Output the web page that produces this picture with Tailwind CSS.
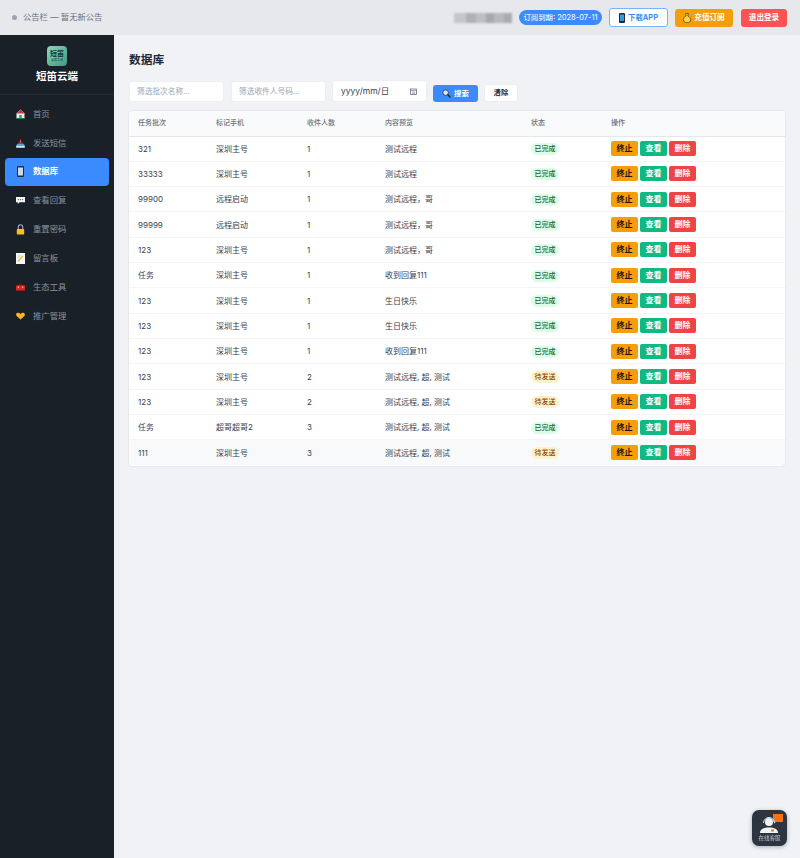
<!DOCTYPE html>
<html lang="zh">
<head>
<meta charset="utf-8">
<script src="https://cdn.jsdelivr.net/npm/@tailwindcss/browser@4"></script>
<title>数据库</title>
</head>
<body class="h-[858px] w-[800px] overflow-hidden bg-[#f0f2f5] font-['Inter','Noto_Sans_CJK_SC',sans-serif] text-[8px] text-[#374151]">
<header class="flex h-[35px] items-center bg-[#e6e8ec] pl-[12px] pr-[13px]">
  <span class="h-[5px] w-[5px] rounded-full bg-[#9ca3af]"></span>
  <span class="ml-[6px] text-[8.300px] text-[#6b7280]">公告栏 — 暂无新公告</span>
  <div class="ml-auto flex items-center">
    <div class="flex h-[10px] w-[58px] blur-[1px]">
      <span class="w-[12px] bg-[#c4c6ca]"></span><span class="w-[10px] bg-[#aeb0b5]"></span><span class="w-[10px] bg-[#bcbec3]"></span><span class="w-[8px] bg-[#a6a8ae]"></span><span class="w-[10px] bg-[#b6b8bd]"></span><span class="w-[8px] bg-[#a9abb1]"></span>
    </div>
    <div class="ml-[7px] flex h-[15px] w-[83px] items-center justify-center rounded-full bg-[#3b8bff] text-[7.400px] font-medium text-[#e8f1ff]">订阅到期: 2028-07-11</div>
    <div class="ml-[7px] flex h-[19px] w-[59px] items-center justify-center gap-[3px] rounded-[3px] border border-[#7fb0fb] bg-white text-[7.400px] font-bold text-[#3b8bff]">
      <svg width="6" height="10" viewBox="0 0 6 10"><rect width="6" height="10" rx="1" fill="#1f2937"/><rect x="1" y="1.500" width="4" height="6.500" fill="#2f9be0"/></svg>下载APP</div>
    <div class="ml-[7px] flex h-[18px] w-[58px] items-center justify-center gap-[3px] rounded-[3px] bg-[#f59e0b] text-[7.600px] font-bold text-white">
      <svg width="8" height="10" viewBox="0 0 8 10"><path d="M2.600 .5h2.800L4.800 3c2 .8 2.800 2.300 2.800 3.800C7.600 8.800 6 9.700 4 9.700S.4 8.800.4 6.800C.4 5.300 1.200 3.800 3.200 3z" fill="#fcd34d" stroke="#5b3a05" stroke-width=".7"/></svg>充值订阅</div>
    <div class="ml-[8px] flex h-[18px] w-[46px] items-center justify-center rounded-[3px] bg-[#ff5252] text-[7.600px] font-bold text-white">退出登录</div>
  </div>
</header>
<div class="flex h-[823px]">
  <aside class="w-[114px] shrink-0 bg-[#1a2028]">
    <div class="flex h-[60px] flex-col items-center border-b border-[#252c35] pt-[11px]">
      <div class="flex h-[20px] w-[20px] flex-col items-center justify-center rounded-[4px] bg-gradient-to-br from-[#8fd8c0] to-[#3d9880] leading-none">
        <span class="text-[7px] font-bold leading-[8px] text-[#123b30]">短笛</span>
        <span class="text-[3px] leading-[4px] text-[#123b30]">云端工具</span>
      </div>
      <div class="mt-[3px] text-[10.500px] font-bold leading-[16px] text-white">短笛云端</div>
    </div>
    <nav class="flex flex-col pt-[5px]">
      <a class="mx-[5px] flex h-[28.800px] items-center pl-[11px] text-[8.400px] text-[#8a929e]">
        <svg class="mr-[8px] w-[9px]" width="9" height="10" viewBox="0 0 9 10"><path d="M4.500 .5 8.500 4.500V9.500H.5V4.500z" fill="#e8ecef"/><path d="M4.500 .5 8.500 4.500H.5z" fill="#c23b3b"/><rect x="3.300" y="6" width="2.400" height="3.500" fill="#4b8f5a"/><path d="M.5 9.500h8" stroke="#15803d"/></svg>首页</a>
      <a class="mx-[5px] flex h-[28.800px] items-center pl-[11px] text-[8.400px] text-[#8a929e]">
        <svg class="mr-[8px] w-[9px]" width="9" height="9" viewBox="0 0 9 9"><path d="M.3 6 2 4.500h5L8.700 6v2.500H.3z" fill="#5ba3d9"/><rect x=".3" y="7" width="8.400" height="1.600" fill="#e5e7eb"/><path d="M4.500 .5v3.500M3 2.500l1.500 1.500L6 2.500" stroke="#ef4444" fill="none"/></svg>发送短信</a>
      <a class="mx-[5px] flex h-[28px] items-center rounded-[4px] bg-[#3b8bff] pl-[11px] text-[8.400px] font-bold text-white">
        <svg class="mr-[8px] w-[9px]" width="9" height="11" viewBox="0 0 9 11"><rect x="1" y="0" width="7" height="11" rx="1" fill="#1c2a3a"/><rect x="2" y="1.500" width="5" height="8" fill="#cfd8e3"/></svg>数据库</a>
      <a class="mx-[5px] mt-[.8px] flex h-[28.800px] items-center pl-[11px] text-[8.400px] text-[#8a929e]">
        <svg class="mr-[8px] w-[9px]" width="10" height="9" viewBox="0 0 10 9"><path d="M0 .5h10v6H4L2 8.500V6.500H0z" fill="#f3f4f6"/><circle cx="2.700" cy="3.500" r=".7" fill="#555"/><circle cx="5" cy="3.500" r=".7" fill="#555"/><circle cx="7.300" cy="3.500" r=".7" fill="#555"/></svg>查看回复</a>
      <a class="mx-[5px] flex h-[28.800px] items-center pl-[11px] text-[8.400px] text-[#8a929e]">
        <svg class="mr-[8px] w-[9px]" width="9" height="11" viewBox="0 0 9 11"><path d="M2.300 5V3a2.200 2.200 0 0 1 4.400 0v2" fill="none" stroke="#a8adb5" stroke-width="1.100"/><rect x=".8" y="5" width="7.400" height="5.500" rx=".8" fill="#fbbf24"/></svg>重置密码</a>
      <a class="mx-[5px] flex h-[28.800px] items-center pl-[11px] text-[8.400px] text-[#8a929e]">
        <svg class="mr-[8px] w-[9px]" width="9" height="11" viewBox="0 0 9 11"><rect width="9" height="11" fill="#f3f4f6"/><path d="M2 8.500 6.800 2.800" stroke="#f0b93a" stroke-width="1.300"/><path d="M1.500 3h3M1.500 5h2" stroke="#b5bac2" stroke-width=".6"/></svg>留言板</a>
      <a class="mx-[5px] flex h-[28.800px] items-center pl-[11px] text-[8.400px] text-[#8a929e]">
        <svg class="mr-[8px] w-[9px]" width="10" height="8" viewBox="0 0 10 8"><path d="M3.500 2V.8h3V2" fill="none" stroke="#7f1d1d"/><rect y="2" width="10" height="6" rx=".8" fill="#dc2626"/><rect x="2" y="3.500" width="1.200" height="1.500" fill="#fde68a"/><rect x="6.800" y="3.500" width="1.200" height="1.500" fill="#fde68a"/></svg>生态工具</a>
      <a class="mx-[5px] flex h-[28.800px] items-center pl-[11px] text-[8.400px] text-[#8a929e]">
        <svg class="mr-[8px] w-[9px]" width="10" height="8" viewBox="0 0 10 8"><path d="M5 8 .7 4C-.3 2.800.2.700 1.800.5 3.200.300 4.300 1 5 2 5.700 1 6.800.300 8.200.5 9.800.700 10.300 2.800 9.300 4z" fill="#fbb824"/></svg>推广管理</a>
    </nav>
  </aside>
  <main class="flex-1 pl-[15px] pr-[15px] pt-[16px]">
    <h1 class="text-[11.700px] font-bold leading-[18px] text-[#1f2937]">数据库</h1>
    <div class="mt-[11px] flex items-end">
      <div class="flex h-[21px] w-[95px] items-center rounded-[3px] border border-[#eceef1] bg-white pl-[7px] text-[7.700px] text-[#9ca3af]">筛选批次名称...</div>
      <div class="ml-[7px] flex h-[21px] w-[95px] items-center rounded-[3px] border border-[#eceef1] bg-white pl-[7px] text-[7.700px] text-[#9ca3af]">筛选收件人号码...</div>
      <div class="ml-[6px] flex h-[22px] w-[95px] items-center justify-between rounded-[3px] border border-[#eceef1] bg-white pl-[8px] pr-[9px] text-[8.500px] text-[#374151]">yyyy/mm/日
        <svg width="7" height="7" viewBox="0 0 7 7"><rect x=".5" y="1" width="6" height="5.500" fill="none" stroke="#6b7280" stroke-width=".8"/><path d="M.5 2.500h6M2 4h3M2 5.300h3" stroke="#6b7280" stroke-width=".6"/></svg></div>
      <div class="ml-[6px] flex h-[17px] w-[45px] items-center justify-center gap-[3px] rounded-[3px] bg-[#3b8bff] text-[7.400px] font-bold text-white">
        <svg width="9" height="9" viewBox="0 0 9 9"><circle cx="3.600" cy="3.600" r="2.800" fill="#dbeafe" stroke="#374151" stroke-width="1"/><path d="M5.600 5.600 8.500 8.500" stroke="#1f2937" stroke-width="1.400"/></svg>搜索</div>
      <div class="ml-[6px] flex h-[18px] w-[34px] items-center justify-center rounded-[3px] border border-[#eceef1] bg-white text-[7.400px] font-bold text-[#1f2937]">清除</div>
    </div>
    <div class="mt-[9px] h-[355px] w-[656px] overflow-hidden rounded-[4px] bg-white shadow-[0_0_2px_rgba(0,0,0,.14)]">
      <table class="w-full table-fixed border-collapse text-left">
        <colgroup><col class="w-[78px]"><col class="w-[91px]"><col class="w-[78px]"><col class="w-[146px]"><col class="w-[80px]"><col></colgroup>
        <thead class="bg-[#f9fafb] text-[7px] text-[#6b7280]">
          <tr class="h-[25px] border-b border-[#e5e7eb]"><th class="pl-[9px] font-medium">任务批次</th><th class="pl-[9px] font-medium">标记手机</th><th class="pl-[9px] font-medium">收件人数</th><th class="pl-[9px] font-medium">内容预览</th><th class="pl-[9px] font-medium">状态</th><th class="pl-[9px] font-medium">操作</th></tr>
        </thead>
        <tbody class="text-[8px] text-[#374151]">
          <tr class="h-[25.330px] border-b border-[#f3f4f6]"><td class="pl-[9px]">321</td><td class="pl-[9px]">深圳主号</td><td class="pl-[9px]">1</td><td class="pl-[9px]">测试远程</td><td class="pl-[9px]"><span class="inline-block h-[12px] w-[28px] rounded-full bg-[#dcfce7] text-center text-[7px] font-medium leading-[12px] text-[#166534]">已完成</span></td><td class="pl-[9px]"><div class="flex gap-[2px]"><span class="h-[15px] w-[27px] rounded-[2px] bg-[#f59e0b] text-center font-bold leading-[15px] text-[#1f1500]">终止</span><span class="h-[15px] w-[27px] rounded-[2px] bg-[#10b981] text-center font-bold leading-[15px] text-white">查看</span><span class="h-[15px] w-[27px] rounded-[2px] bg-[#ef4444] text-center font-bold leading-[15px] text-white">删除</span></div></td></tr>
          <tr class="h-[25.330px] border-b border-[#f3f4f6]"><td class="pl-[9px]">33333</td><td class="pl-[9px]">深圳主号</td><td class="pl-[9px]">1</td><td class="pl-[9px]">测试远程</td><td class="pl-[9px]"><span class="inline-block h-[12px] w-[28px] rounded-full bg-[#dcfce7] text-center text-[7px] font-medium leading-[12px] text-[#166534]">已完成</span></td><td class="pl-[9px]"><div class="flex gap-[2px]"><span class="h-[15px] w-[27px] rounded-[2px] bg-[#f59e0b] text-center font-bold leading-[15px] text-[#1f1500]">终止</span><span class="h-[15px] w-[27px] rounded-[2px] bg-[#10b981] text-center font-bold leading-[15px] text-white">查看</span><span class="h-[15px] w-[27px] rounded-[2px] bg-[#ef4444] text-center font-bold leading-[15px] text-white">删除</span></div></td></tr>
          <tr class="h-[25.330px] border-b border-[#f3f4f6]"><td class="pl-[9px]">99900</td><td class="pl-[9px]">远程启动</td><td class="pl-[9px]">1</td><td class="pl-[9px]">测试远程，哥</td><td class="pl-[9px]"><span class="inline-block h-[12px] w-[28px] rounded-full bg-[#dcfce7] text-center text-[7px] font-medium leading-[12px] text-[#166534]">已完成</span></td><td class="pl-[9px]"><div class="flex gap-[2px]"><span class="h-[15px] w-[27px] rounded-[2px] bg-[#f59e0b] text-center font-bold leading-[15px] text-[#1f1500]">终止</span><span class="h-[15px] w-[27px] rounded-[2px] bg-[#10b981] text-center font-bold leading-[15px] text-white">查看</span><span class="h-[15px] w-[27px] rounded-[2px] bg-[#ef4444] text-center font-bold leading-[15px] text-white">删除</span></div></td></tr>
          <tr class="h-[25.330px] border-b border-[#f3f4f6]"><td class="pl-[9px]">99999</td><td class="pl-[9px]">远程启动</td><td class="pl-[9px]">1</td><td class="pl-[9px]">测试远程，哥</td><td class="pl-[9px]"><span class="inline-block h-[12px] w-[28px] rounded-full bg-[#dcfce7] text-center text-[7px] font-medium leading-[12px] text-[#166534]">已完成</span></td><td class="pl-[9px]"><div class="flex gap-[2px]"><span class="h-[15px] w-[27px] rounded-[2px] bg-[#f59e0b] text-center font-bold leading-[15px] text-[#1f1500]">终止</span><span class="h-[15px] w-[27px] rounded-[2px] bg-[#10b981] text-center font-bold leading-[15px] text-white">查看</span><span class="h-[15px] w-[27px] rounded-[2px] bg-[#ef4444] text-center font-bold leading-[15px] text-white">删除</span></div></td></tr>
          <tr class="h-[25.330px] border-b border-[#f3f4f6]"><td class="pl-[9px]">123</td><td class="pl-[9px]">深圳主号</td><td class="pl-[9px]">1</td><td class="pl-[9px]">测试远程，哥</td><td class="pl-[9px]"><span class="inline-block h-[12px] w-[28px] rounded-full bg-[#dcfce7] text-center text-[7px] font-medium leading-[12px] text-[#166534]">已完成</span></td><td class="pl-[9px]"><div class="flex gap-[2px]"><span class="h-[15px] w-[27px] rounded-[2px] bg-[#f59e0b] text-center font-bold leading-[15px] text-[#1f1500]">终止</span><span class="h-[15px] w-[27px] rounded-[2px] bg-[#10b981] text-center font-bold leading-[15px] text-white">查看</span><span class="h-[15px] w-[27px] rounded-[2px] bg-[#ef4444] text-center font-bold leading-[15px] text-white">删除</span></div></td></tr>
          <tr class="h-[25.330px] border-b border-[#f3f4f6]"><td class="pl-[9px]">任务</td><td class="pl-[9px]">深圳主号</td><td class="pl-[9px]">1</td><td class="pl-[9px]">收到回复111</td><td class="pl-[9px]"><span class="inline-block h-[12px] w-[28px] rounded-full bg-[#dcfce7] text-center text-[7px] font-medium leading-[12px] text-[#166534]">已完成</span></td><td class="pl-[9px]"><div class="flex gap-[2px]"><span class="h-[15px] w-[27px] rounded-[2px] bg-[#f59e0b] text-center font-bold leading-[15px] text-[#1f1500]">终止</span><span class="h-[15px] w-[27px] rounded-[2px] bg-[#10b981] text-center font-bold leading-[15px] text-white">查看</span><span class="h-[15px] w-[27px] rounded-[2px] bg-[#ef4444] text-center font-bold leading-[15px] text-white">删除</span></div></td></tr>
          <tr class="h-[25.330px] border-b border-[#f3f4f6]"><td class="pl-[9px]">123</td><td class="pl-[9px]">深圳主号</td><td class="pl-[9px]">1</td><td class="pl-[9px]">生日快乐</td><td class="pl-[9px]"><span class="inline-block h-[12px] w-[28px] rounded-full bg-[#dcfce7] text-center text-[7px] font-medium leading-[12px] text-[#166534]">已完成</span></td><td class="pl-[9px]"><div class="flex gap-[2px]"><span class="h-[15px] w-[27px] rounded-[2px] bg-[#f59e0b] text-center font-bold leading-[15px] text-[#1f1500]">终止</span><span class="h-[15px] w-[27px] rounded-[2px] bg-[#10b981] text-center font-bold leading-[15px] text-white">查看</span><span class="h-[15px] w-[27px] rounded-[2px] bg-[#ef4444] text-center font-bold leading-[15px] text-white">删除</span></div></td></tr>
          <tr class="h-[25.330px] border-b border-[#f3f4f6]"><td class="pl-[9px]">123</td><td class="pl-[9px]">深圳主号</td><td class="pl-[9px]">1</td><td class="pl-[9px]">生日快乐</td><td class="pl-[9px]"><span class="inline-block h-[12px] w-[28px] rounded-full bg-[#dcfce7] text-center text-[7px] font-medium leading-[12px] text-[#166534]">已完成</span></td><td class="pl-[9px]"><div class="flex gap-[2px]"><span class="h-[15px] w-[27px] rounded-[2px] bg-[#f59e0b] text-center font-bold leading-[15px] text-[#1f1500]">终止</span><span class="h-[15px] w-[27px] rounded-[2px] bg-[#10b981] text-center font-bold leading-[15px] text-white">查看</span><span class="h-[15px] w-[27px] rounded-[2px] bg-[#ef4444] text-center font-bold leading-[15px] text-white">删除</span></div></td></tr>
          <tr class="h-[25.330px] border-b border-[#f3f4f6]"><td class="pl-[9px]">123</td><td class="pl-[9px]">深圳主号</td><td class="pl-[9px]">1</td><td class="pl-[9px]">收到回复111</td><td class="pl-[9px]"><span class="inline-block h-[12px] w-[28px] rounded-full bg-[#dcfce7] text-center text-[7px] font-medium leading-[12px] text-[#166534]">已完成</span></td><td class="pl-[9px]"><div class="flex gap-[2px]"><span class="h-[15px] w-[27px] rounded-[2px] bg-[#f59e0b] text-center font-bold leading-[15px] text-[#1f1500]">终止</span><span class="h-[15px] w-[27px] rounded-[2px] bg-[#10b981] text-center font-bold leading-[15px] text-white">查看</span><span class="h-[15px] w-[27px] rounded-[2px] bg-[#ef4444] text-center font-bold leading-[15px] text-white">删除</span></div></td></tr>
          <tr class="h-[25.330px] border-b border-[#f3f4f6]"><td class="pl-[9px]">123</td><td class="pl-[9px]">深圳主号</td><td class="pl-[9px]">2</td><td class="pl-[9px]">测试远程, 超, 测试</td><td class="pl-[9px]"><span class="inline-block h-[12px] w-[28px] rounded-full bg-[#fef3c7] text-center text-[7px] font-medium leading-[12px] text-[#92400e]">待发送</span></td><td class="pl-[9px]"><div class="flex gap-[2px]"><span class="h-[15px] w-[27px] rounded-[2px] bg-[#f59e0b] text-center font-bold leading-[15px] text-[#1f1500]">终止</span><span class="h-[15px] w-[27px] rounded-[2px] bg-[#10b981] text-center font-bold leading-[15px] text-white">查看</span><span class="h-[15px] w-[27px] rounded-[2px] bg-[#ef4444] text-center font-bold leading-[15px] text-white">删除</span></div></td></tr>
          <tr class="h-[25.330px] border-b border-[#f3f4f6]"><td class="pl-[9px]">123</td><td class="pl-[9px]">深圳主号</td><td class="pl-[9px]">2</td><td class="pl-[9px]">测试远程, 超, 测试</td><td class="pl-[9px]"><span class="inline-block h-[12px] w-[28px] rounded-full bg-[#fef3c7] text-center text-[7px] font-medium leading-[12px] text-[#92400e]">待发送</span></td><td class="pl-[9px]"><div class="flex gap-[2px]"><span class="h-[15px] w-[27px] rounded-[2px] bg-[#f59e0b] text-center font-bold leading-[15px] text-[#1f1500]">终止</span><span class="h-[15px] w-[27px] rounded-[2px] bg-[#10b981] text-center font-bold leading-[15px] text-white">查看</span><span class="h-[15px] w-[27px] rounded-[2px] bg-[#ef4444] text-center font-bold leading-[15px] text-white">删除</span></div></td></tr>
          <tr class="h-[25.330px] border-b border-[#f3f4f6]"><td class="pl-[9px]">任务</td><td class="pl-[9px]">超哥超哥2</td><td class="pl-[9px]">3</td><td class="pl-[9px]">测试远程, 超, 测试</td><td class="pl-[9px]"><span class="inline-block h-[12px] w-[28px] rounded-full bg-[#dcfce7] text-center text-[7px] font-medium leading-[12px] text-[#166534]">已完成</span></td><td class="pl-[9px]"><div class="flex gap-[2px]"><span class="h-[15px] w-[27px] rounded-[2px] bg-[#f59e0b] text-center font-bold leading-[15px] text-[#1f1500]">终止</span><span class="h-[15px] w-[27px] rounded-[2px] bg-[#10b981] text-center font-bold leading-[15px] text-white">查看</span><span class="h-[15px] w-[27px] rounded-[2px] bg-[#ef4444] text-center font-bold leading-[15px] text-white">删除</span></div></td></tr>
          <tr class="h-[25.330px] bg-[#f8f9fb]"><td class="pl-[9px]">111</td><td class="pl-[9px]">深圳主号</td><td class="pl-[9px]">3</td><td class="pl-[9px]">测试远程, 超, 测试</td><td class="pl-[9px]"><span class="inline-block h-[12px] w-[28px] rounded-full bg-[#fef3c7] text-center text-[7px] font-medium leading-[12px] text-[#92400e]">待发送</span></td><td class="pl-[9px]"><div class="flex gap-[2px]"><span class="h-[15px] w-[27px] rounded-[2px] bg-[#f59e0b] text-center font-bold leading-[15px] text-[#1f1500]">终止</span><span class="h-[15px] w-[27px] rounded-[2px] bg-[#10b981] text-center font-bold leading-[15px] text-white">查看</span><span class="h-[15px] w-[27px] rounded-[2px] bg-[#ef4444] text-center font-bold leading-[15px] text-white">删除</span></div></td></tr>
        </tbody>
      </table>
    </div>
  </main>
</div>
<div class="fixed left-[752px] top-[810px] flex h-[36px] w-[35px] flex-col items-center rounded-[7px] bg-[#2d3540] pt-[3px] shadow-[0_1px_4px_rgba(0,0,0,.3)]">
  <svg width="28" height="22" viewBox="0 0 28 22"><path d="M17 1h10v8h-7l-2 2V9h-1z" fill="#f97316"/><circle cx="13" cy="9" r="4" fill="#f3f4f6"/><path d="M7.500 10a5.500 5.500 0 0 1 11 0" fill="none" stroke="#e5e7eb"/><path d="M4 20c0-4 4-5.500 9-5.500s9 1.500 9 5.500z" fill="#f3f4f6"/><rect x="15" y="16.500" width="3" height="2" fill="#f97316"/></svg>
  <span class="text-[5.500px] leading-[7px] text-[#c5c9d0]">在线客服</span>
</div>
</body>
</html>
